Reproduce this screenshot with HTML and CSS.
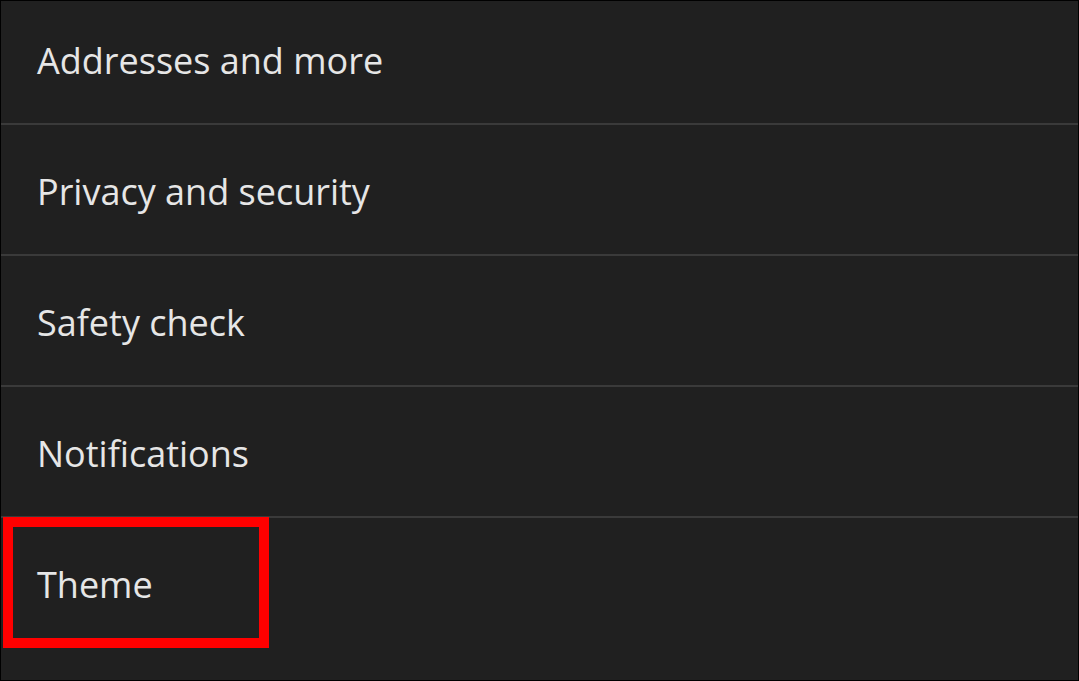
FILE: index.html
```html
<!DOCTYPE html>
<html lang="en">
<head>
    <meta charset="UTF-8">
    <meta name="viewport" content="width=device-width, initial-scale=1.0">
    <title>Settings</title>
    <link rel="stylesheet" href="styles.css">
</head>
<body>
    <div class="screen">
        <ul class="settings-list">
            <li class="settings-item">Addresses and more</li>
            <li class="settings-item">Privacy and security</li>
            <li class="settings-item">Safety check</li>
            <li class="settings-item">Notifications</li>
            <li class="settings-item highlighted">Theme</li>
        </ul>
    </div>
</body>
</html>
```

FILE: styles.css
```css
html, body {
    margin: 0;
    padding: 0;
    background-color: #000;
}
.screen {
    box-sizing: border-box;
    width: 1079px;
    height: 681px;
    border: 1px solid #000;
    background-color: #202020;
    overflow: hidden;
}
.settings-list {
    list-style: none;
    margin: -7px 0 0 0;
    padding: 0;
}
.settings-item {
    display: flex;
    align-items: center;
    height: 125px;
    padding: 4px 0 0 36px;
    border-bottom: 2px solid #3a3a3a;
    font-family: "Open Sans", sans-serif;
    font-size: 36px;
    color: #e6e6e6;
    position: relative;
}
.settings-item:last-child {
    border-bottom: none;
}
.highlighted::after {
    content: "";
    position: absolute;
    left: 2px;
    top: -1px;
    width: 246px;
    height: 111px;
    border: 10px solid #ff0000;
}
```
